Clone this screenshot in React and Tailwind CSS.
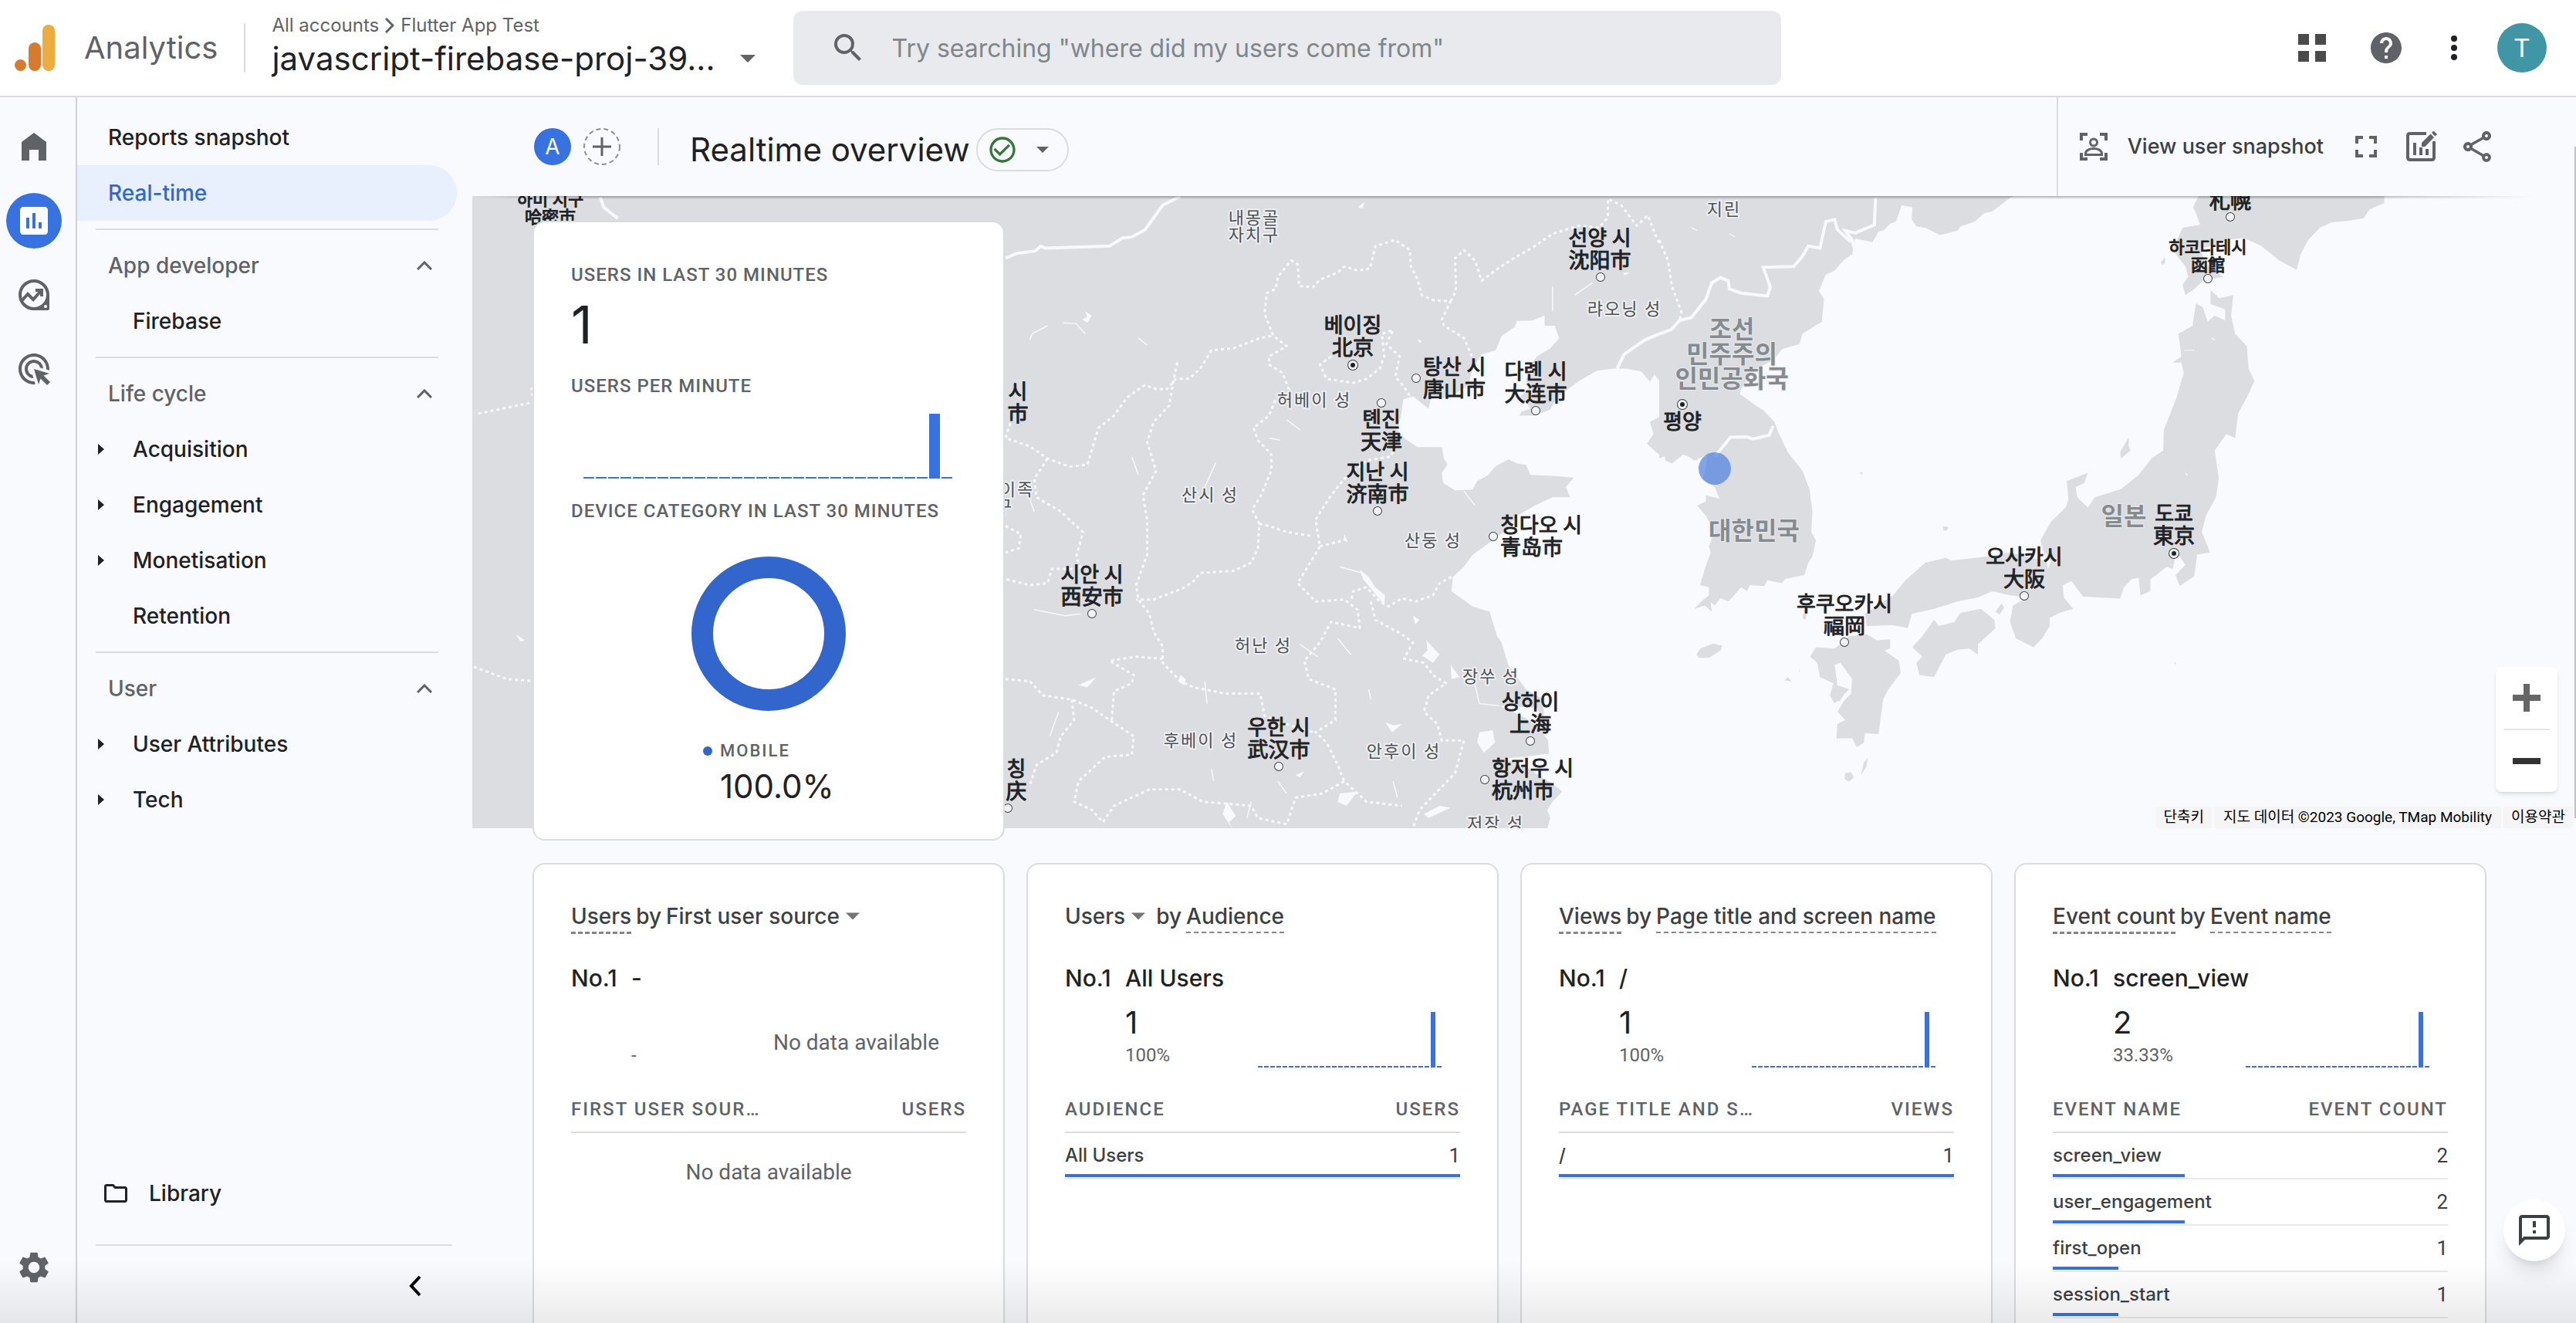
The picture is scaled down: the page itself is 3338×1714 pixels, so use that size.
import {
  MdAdsClick,
  MdCheckCircleOutline,
  MdHelp,
  MdInsertChart,
  MdOutlineFeedback,
  MdOutlineFolder,
  MdOutlineShare,
  MdSearch,
  MdSettings,
} from "react-icons/md";

/* ---------- small drawings ---------- */

function Triangle({ className }) {
  return (
    <svg viewBox="0 0 20 10" className={className} aria-hidden="true">
      <path d="M0 0H20L10 10Z" fill="currentColor" />
    </svg>
  );
}

function AnalyticsLogo() {
  return (
    <svg viewBox="0 0 52 60" className="h-[60px] w-[52px]" aria-hidden="true">
      <rect x="36" y="0" width="16" height="60" rx="8" fill="#ecac3f" />
      <rect x="18" y="23" width="16" height="37" rx="8" fill="#d67b2d" />
      <circle cx="7.5" cy="52.5" r="7.5" fill="#d67b2d" />
    </svg>
  );
}

function HomeIcon() {
  return (
    <svg viewBox="0 0 32 36" className="h-9 w-8" aria-hidden="true">
      <path d="M0 12L16 0L32 12V36H22V22H10V36H0Z" fill="currentColor" />
    </svg>
  );
}

function ExploreIcon() {
  return (
    <svg viewBox="0 0 40 40" className="size-10" fill="none" stroke="currentColor" aria-hidden="true">
      <path d="M38 20V38H20" strokeWidth="4" strokeLinejoin="round" />
      <path d="M38 24V38H24L32 33Z" fill="currentColor" stroke="none" />
      <circle cx="20" cy="20" r="18" strokeWidth="4" />
      <path d="M4 28L12 19L19 26L29 15" strokeWidth="4" />
      <path d="M22 12H32V22H28V16H22Z" fill="currentColor" stroke="none" />
      <circle cx="35" cy="35" r="2" fill="#fff" stroke="none" />
    </svg>
  );
}

function UserSnapshotIcon() {
  return (
    <svg viewBox="0 0 36 36" className="size-9" fill="none" stroke="currentColor" aria-hidden="true">
      <path d="M2 10V2H10M26 2H34V10M34 26V34H26M10 34H2V26" strokeWidth="4" />
      <circle cx="18" cy="12.5" r="4.5" strokeWidth="3" />
      <path d="M7.500 28.500V27C7.500 22.500 13 20.500 18 20.500S28.500 22.500 28.500 27V28.500Z" strokeWidth="3" />
    </svg>
  );
}

function FullscreenIcon() {
  return (
    <svg viewBox="0 0 28 28" className="size-7" fill="none" stroke="currentColor" aria-hidden="true">
      <path d="M2 10V2H10M18 2H26V10M26 18V26H18M10 26H2V18" strokeWidth="4" />
    </svg>
  );
}

function EditChartIcon() {
  return (
    <svg viewBox="0 0 40 42" className="h-[42px] w-10" fill="none" stroke="currentColor" aria-hidden="true">
      <path d="M26 4H5Q2 4 2 7V35Q2 38 5 38H33Q36 38 36 35V14" strokeWidth="4" />
      <path d="M11 16V32M19 22V32M27 24V32" strokeWidth="4" />
      <path d="M20 21V16L31.500 4.500L36 9L24.500 21Z" fill="currentColor" stroke="none" />
      <path d="M33 3L35.500 0.500L40 5L37.500 7.500Z" fill="currentColor" stroke="none" />
    </svg>
  );
}

/* ---------- header ---------- */

function Header() {
  return (
    <header className="flex h-[126px] shrink-0 items-center border-b-2 border-[#dadce0] bg-white pr-[38px] pl-[19px]">
      <AnalyticsLogo />
      <span className="ml-[38px] text-[40px] leading-[52px] text-[#5f6368]">Analytics</span>
      <div className="ml-[34px] h-16 w-0.5 bg-[#dadce0]" />
      <div className="ml-[34px]">
        <nav className="flex h-7 items-center gap-2 text-[24px] leading-7 text-[#5f6368]" aria-label="Breadcrumb">
          <a href="#accounts">All accounts</a>
          <svg viewBox="0 0 12 20" className="h-5 w-3" fill="none" stroke="currentColor" strokeWidth="3" aria-hidden="true">
            <path d="M1 1L10 10L1 19" />
          </svg>
          <a href="#flutter">Flutter App Test</a>
        </nav>
        <button className="flex h-[58px] items-center text-[42px] leading-[58px] text-[#202124]">
          javascript-firebase-proj-39...
          <Triangle className="ml-8 h-2.5 w-5 text-[#5f6368]" />
        </button>
      </div>
      <label className="ml-[49px] flex h-24 w-[1280px] items-center rounded-xl bg-[#e8eaed] pl-[47px]">
        <MdSearch className="size-12 shrink-0 text-[#5f6368]" />
        <input
          type="text"
          aria-label="Search"
          placeholder={'Try searching "where did my users come from"'}
          className="ml-[33px] h-full w-full bg-transparent text-[32px] text-[#3c4043] outline-none placeholder:text-[#80868b]"
        />
      </label>
      <div className="ml-auto flex items-center">
        <button aria-label="Apps" className="grid grid-cols-2 gap-2">
          <i className="size-3.5 bg-[#4a4a4a]" />
          <i className="size-3.5 bg-[#4a4a4a]" />
          <i className="size-3.5 bg-[#4a4a4a]" />
          <i className="size-3.5 bg-[#4a4a4a]" />
        </button>
        <button aria-label="Help" className="ml-[54px]">
          <MdHelp className="size-12 text-[#5f6368]" />
        </button>
        <button aria-label="More" className="ml-[60px] flex flex-col gap-1">
          <i className="size-2 rounded-full bg-[#202124]" />
          <i className="size-2 rounded-full bg-[#202124]" />
          <i className="size-2 rounded-full bg-[#202124]" />
        </button>
        <button
          aria-label="Account T"
          className="ml-[52px] flex size-16 items-center justify-center rounded-full bg-[#4196a6] font-['Roboto',sans-serif] text-[34px] text-white"
        >
          T
        </button>
      </div>
    </header>
  );
}

/* ---------- left rail and report navigation ---------- */

function Rail() {
  return (
    <nav aria-label="Sections" className="flex w-[100px] shrink-0 flex-col gap-6 border-r-2 border-[#d0d1d4] pt-7 pb-9 pl-2 text-[#5f6368]">
      <button aria-label="Home" className="flex size-[72px] items-center justify-center">
        <HomeIcon />
      </button>
      <button aria-label="Reports" className="flex size-[72px] items-center justify-center rounded-full bg-[#3871e0]">
        <MdInsertChart className="size-12 text-white" />
      </button>
      <button aria-label="Explore" className="flex size-[72px] items-center justify-center">
        <ExploreIcon />
      </button>
      <button aria-label="Advertising" className="flex size-[72px] items-center justify-center">
        <MdAdsClick className="size-12" />
      </button>
      <button aria-label="Admin" className="mt-auto flex size-[72px] items-center justify-center">
        <MdSettings className="size-12" />
      </button>
    </nav>
  );
}

const SECTIONS = [
  { title: "App developer", items: [["Firebase", false]] },
  {
    title: "Life cycle",
    items: [
      ["Acquisition", true],
      ["Engagement", true],
      ["Monetisation", true],
      ["Retention", false],
    ],
  },
  {
    title: "User",
    items: [
      ["User Attributes", true],
      ["Tech", true],
    ],
  },
];

function ReportNav() {
  return (
    <nav aria-label="Reports" className="flex w-[512px] shrink-0 flex-col pt-4 text-[28px] font-medium text-[#202124]">
      <a href="#snapshot" className="flex h-[72px] items-center pl-10">
        Reports snapshot
      </a>
      <a href="#realtime" aria-current="page" className="mr-5 flex h-[72px] items-center rounded-r-full bg-[#e8effd] pl-10 text-[#3367cf]">
        Real-time
      </a>
      {SECTIONS.map((s) => (
        <div key={s.title} className="pt-2.5">
          <div className="mr-11 ml-6 h-0.5 bg-[#dadce0]" />
          <button className="mt-2.5 flex h-[72px] w-full items-center justify-between pr-[52px] pl-10 text-[#5f6368]">
            {s.title}
            <svg viewBox="0 0 20 12" className="h-3 w-5" fill="none" stroke="currentColor" strokeWidth="3" aria-hidden="true">
              <path d="M1 11L10 2L19 11" />
            </svg>
          </button>
          {s.items.map(([name, opens]) => (
            <a key={name} href={"#" + name} className="flex h-[72px] items-center pl-[27px]">
              <svg viewBox="0 0 8 14" className="mr-[37px] h-3.5 w-2" aria-hidden="true">
                {opens && <path d="M0 0L8 7L0 14Z" fill="currentColor" />}
              </svg>
              {name}
            </a>
          ))}
        </div>
      ))}
      <a href="#library" className="mt-auto flex h-[72px] items-center pl-8">
        <MdOutlineFolder className="size-9" />
        <span className="ml-[25px]">Library</span>
      </a>
      <div className="mt-[30px] mr-[26px] ml-6 h-0.5 bg-[#dadce0]" />
      <button aria-label="Collapse" className="mt-[38px] mr-[66px] mb-[34px] self-end text-black">
        <svg viewBox="0 0 16 28" className="h-7 w-4" fill="none" stroke="currentColor" strokeWidth="4" aria-hidden="true">
          <path d="M14 2L3 14L14 26" />
        </svg>
      </button>
    </nav>
  );
}

/* ---------- report header ---------- */

function ReportHeader() {
  return (
    <div className="relative z-10 flex h-32 shrink-0 items-center bg-[#f8fafd] pr-[104px] pl-20">
      <span className="flex size-12 items-center justify-center rounded-full bg-[#3871e0] text-[28px] text-white">A</span>
      <button aria-label="Add comparison" className="ml-4 text-[#5f6368]">
        <svg viewBox="0 0 48 48" className="size-12" fill="none" stroke="currentColor" aria-hidden="true">
          <circle cx="24" cy="24" r="23" strokeWidth="2" strokeDasharray="6 4" opacity=".7" />
          <path d="M12 24H36M24 12V36" strokeWidth="3" />
        </svg>
      </button>
      <div className="ml-12 h-12 w-0.5 bg-[#dadce0]" />
      <h1 className="mt-2 ml-10 text-[42px] leading-[56px] text-[#202124]">Realtime overview</h1>
      <button aria-label="Report status" className="mt-2 ml-2 flex h-14 items-center rounded-full border-2 border-[#dadce0] pr-6 pl-3">
        <MdCheckCircleOutline className="size-10 text-[#34773a]" />
        <Triangle className="ml-6 h-2 w-4 text-[#5f6368]" />
      </button>
      <div className="ml-auto flex h-full items-center border-l-2 border-[#dadce0] pl-7 text-[#5f6368]">
        <button className="flex items-center gap-[26px] text-[27px] font-medium">
          <UserSnapshotIcon />
          <span className="text-[#3c4043]">View user snapshot</span>
        </button>
        <button aria-label="Full screen" className="ml-[41px]">
          <FullscreenIcon />
        </button>
        <button aria-label="Customise report" className="ml-[38px]">
          <EditChartIcon />
        </button>
        <button aria-label="Share" className="ml-7">
          <MdOutlineShare className="size-12" />
        </button>
      </div>
      <div className="absolute inset-x-0 top-full h-1 bg-gradient-to-b from-black/30 to-transparent [mask-image:linear-gradient(to_right,transparent,black_5%,black_90%,transparent_98%)]" />
    </div>
  );
}

/* ---------- map ---------- */

const CHINA =
  "M-1200 0H1568V655L1535 640L1510 662L1495 655L1490 628L1480 640L1453 614L1468 590L1460 560L1482 548L1488 520L1500 505L1503 470L1490 470L1470 445L1460 462L1440 437L1405 430L1380 430L1340 435L1300 460L1275 480L1250 500L1235 530L1200 545L1165 545L1170 535L1190 528L1180 510L1160 505L1185 480L1180 455L1195 440L1190 420L1205 400L1235 380L1255 355L1245 325L1222 325L1222 300L1195 312L1160 313L1155 328L1125 350L1112 385L1080 395L1060 430L1050 470L1010 500L965 505L960 528L945 515L925 498L903 505L898 545L890 580L905 600L935 622L990 622L995 650L1003 665L990 685L993 710L1020 728L1060 726L1070 705L1095 690L1110 670L1140 652L1160 662L1180 665L1190 690L1250 693L1288 697L1270 720L1280 745L1240 745L1200 765L1160 790L1130 830L1080 870L1060 885L1040 915L1015 940L1012 975L1060 1012L1098 1025L1115 1085L1125 1100L1140 1155L1160 1185L1180 1215L1220 1240L1220 1290L1205 1260L1120 1255L1180 1285L1210 1310L1230 1340L1232 1372L1190 1378L1130 1385L1180 1405L1245 1450L1262 1465L1240 1490L1228 1510L1235 1530L1225 1568H-1200Z";

const KOREA =
  "M0 0H620L600 12L570 45L555 50L540 70L515 82L510 92L480 103L455 85L440 82L432 65L433 35L415 30L405 70L395 75L385 90L375 95L365 120L335 112L330 150L315 165L300 190L285 200L273 240L282 260L278 315L245 345L240 370L210 382L195 410L165 430L140 480L138 492L165 520L178 532L197 560L205 590L220 635L245 680L257 725L262 780L260 830L268 850L262 890L255 905L248 935L215 945L210 955L185 948L180 962L155 960L150 975L140 965L125 990L118 1000L105 992L95 1010L88 1002L90 1025L78 1010L60 1018L72 1000L85 985L85 965L70 960L78 920L88 880L85 865L95 830L80 790L65 765L80 755L80 740L103 748L95 720L75 700L80 670L82 640L60 655L45 640L30 632L0 650Z";

const ISLANDS = [
  /* Hokkaido */
  "M925 0H1240L1240 25L1215 40L1205 62L1180 68L1150 72L1130 85L1110 115L1097 150L1090 188L1060 165L1030 130L1000 110L970 115L945 130L925 135L935 175L948 190L965 205L930 215L915 235L900 250L895 225L905 205L900 180L878 140L895 85L925 78L918 50L913 35Z",
  /* Honshu */
  "M943 238L958 258L982 250L978 300L985 345L1005 375L1008 430L1018 460L1005 500L990 540L985 600L970 590L950 630L957 700L952 745L935 790L928 830L942 880L920 885L915 938L890 962L883 935L900 910L885 880L878 920L868 915L850 935L840 945L840 975L823 985L820 942L808 945L795 965L788 993L725 988L705 950L690 960L692 990L708 1018L685 1028L668 1040L668 1060L655 1090L640 1112L610 1090L600 1050L605 1010L630 990L600 985L570 975L545 990L510 1000L470 1018L432 1030L425 1065L400 1058L355 1060L352 1030L400 985L420 950L455 905L490 893L500 900L560 890L600 880L640 895L662 900L652 850L670 805L695 770L700 750L697 705L733 685L727 710L712 720L715 745L733 770L745 745L790 725L820 690L842 650L862 630L863 580L885 500L897 440L893 415L878 415L893 400L888 345L912 325L918 270L930 280L938 315L950 300L968 312L968 285L943 272Z",
  /* Shikoku */
  "M470 1045L478 1060L505 1050L515 1028L550 1018L573 1045L575 1065L545 1105L545 1130L530 1115L510 1118L490 1130L470 1185L445 1180L440 1150L450 1135L433 1112L450 1085Z",
  /* Kyushu */
  "M355 1080L372 1095L395 1093L395 1115L385 1120L410 1145L413 1175L392 1215L383 1240L375 1325L352 1322L350 1345L338 1357L330 1335L303 1335L305 1300L318 1290L305 1270L315 1245L328 1225L330 1190L310 1150L300 1155L305 1205L325 1215L300 1250L292 1230L298 1200L275 1185L270 1150L258 1135L268 1112L300 1115L325 1085Z",
  /* Kyushu bay and Amakusa */
  "M300 1215L322 1215L308 1245L295 1235Z",
  /* Jeju, Sado, Tsushima, Oki, Tanegashima, Yakushima, Goto */
  "M64 1130L70 1115L92 1103L108 1108L105 1120L85 1138L68 1138Z",
  "M788 635L803 598L803 620L806 630L790 650Z",
  "M245 1040L250 1010L255 1020L250 1045Z",
  "M485 815L495 818L492 826L486 826Z",
  "M345 1425L350 1395L357 1382L354 1405Z",
  "M318 1420L328 1418L333 1430L324 1441L317 1434Z",
  "M213 1195L220 1185L227 1196L218 1193Z",
  "M237 1175L243 1160L240 1170Z",
  "M858 170L865 157L865 172L860 176Z",
  "M342 684L348 684L346 690Z",
  "M575 1025L585 1005L590 1015L582 1032Z",
  "M880 1148L885 1152L882 1154Z",
];

const PROVINCES = [
  "M1058 400L1040 355L995 325L990 310L1010 265L970 262L945 250L935 210L920 180L918 140L885 115L840 130L828 185L800 190L770 180L755 195L715 212L700 230L668 228L665 175L650 165L620 205L615 235L595 245L590 295L610 350L640 375L600 400L600 420L630 440L645 480L640 505L615 505L600 545L565 575L575 605L605 640L605 680L582 740L562 775L578 810L575 870L560 905L520 925L445 930L430 950L405 968L340 995L300 995",
  "M1010 265L1022 240L1020 160L1040 140L1065 165L1080 215L1110 190L1145 165L1200 130L1240 100L1300 80L1345 85L1365 60L1365 15L1395 30L1430 80L1455 55L1475 110L1500 160L1495 215L1530 290L1530 315",
  "M605 350L580 355L520 380L470 385L445 430L420 455L390 455L370 480L345 480L320 470L280 500L250 545L215 575L190 665L150 670L100 650L60 620L5 600L20 550",
  "M393 415L385 455L375 520L340 560L325 610L345 680L315 740L325 800L325 885L300 960L305 995L330 1030L340 1075L360 1110L360 1150L400 1195L430 1210L500 1225L580 1225L590 1280L640 1300L700 1320",
  "M740 400L715 420L730 455L790 465L820 455L850 430L860 400L855 345L880 335L865 370L895 400L885 450L905 475L920 500",
  "M885 620L875 645L820 655L770 700L740 740L705 800L715 865L690 910L665 955L705 1000L770 995L800 1020L805 1065L740 1050L715 1100L680 1145L690 1190L750 1215L750 1290L705 1320L730 1345L755 1400L770 1440",
  "M578 810L600 815L640 830L700 840M715 865L770 850",
  "M1012 940L985 955L970 985L930 1000L900 992L870 1012L850 1000L820 965L790 975L785 1000",
  "M830 1000L840 1045L900 1080L925 1100L905 1140L950 1150L970 1180L1000 1200L960 1230L950 1270L980 1300L990 1340L1040 1340L1020 1420L980 1465L940 1510L920 1568",
  "M5 1190L60 1195L90 1230L155 1240L200 1260L240 1290L295 1330L290 1375L230 1380L170 1440L160 1490L200 1510L225 1540L250 1500L330 1460L400 1460L450 1490L560 1500L575 1530L640 1545L660 1480L720 1470L770 1440L820 1490L900 1500",
  "M245 1290L250 1220L290 1200L295 1180L240 1145L300 1135L360 1140",
  "M155 1240L160 1290L130 1330L120 1370L75 1400L60 1450",
  "M100 650L70 700L75 745L130 780L180 830L165 890L175 920L110 920L100 955L60 960L5 945M5 815L40 835L35 870L5 880",
  "M-1185 540L-1060 512L-1000 492M-1060 512L-1065 480L-1030 440L-1005 400L-1000 340M-1195 1160L-1120 1190L-1000 1200",
];

const LAKES =
  "M185 290L200 300L190 318L178 310L190 303ZM800 35L815 22L812 38ZM805 922L825 940L840 965L862 985L860 1008L835 975L812 945ZM925 1035L940 1045L930 1056ZM955 1095L985 1130L970 1150L945 1132L958 1120ZM1010 1155L1030 1185L1012 1190ZM1075 1320L1105 1315L1110 1345L1085 1370L1070 1345ZM862 1295L880 1303L900 1300L878 1320ZM400 1180L412 1190L408 1205L395 1195ZM760 1470L800 1465L775 1500L755 1490ZM505 1490L525 1525L510 1540L520 1560L495 1520ZM950 1520L985 1500L1010 1505L960 1530ZM935 358L945 362L940 368ZM770 835L778 855L768 850ZM660 1425L680 1415L670 1430ZM1400 195L1415 195L1402 202ZM170 1205L210 1185L190 1210ZM-1050 590L-1030 595L-1040 603ZM-1100 1080L-1080 1095L-1090 1098Z";

const RIVERS =
  "M60 360L65 345L100 325M135 318L165 320L185 345M305 355L325 372M290 645L305 690M480 660L455 720M70 1020L140 1035L175 1030M760 915L810 930M670 1105L710 1135M755 1090L785 1130M1040 730L1065 765M1060 1180L1075 1250L1120 1255M1240 230L1240 290M1290 250L1330 220M105 1330L125 1270M455 1195L460 1250M60 750L70 780M825 1215L830 1240M600 600L625 605M640 555L670 580M470 1410L475 1440M560 1490L550 1530M620 1440L640 1470M880 1440L890 1480";

/* x, y is the centre of the first line; further lines run downwards */
const CITIES = [
  { x: 2073, y: 308, lines: ["선양 시", "沈阳市"], dot: [2074, 359] },
  { x: 1753, y: 421, lines: ["베이징", "北京"], dot: [1753, 473], capital: true },
  { x: 1844, y: 475, lines: ["탕산 시", "唐山市"], dot: [1835, 490], anchor: "start" },
  { x: 1990, y: 481, lines: ["다롄 시", "大连市"], dot: [1990, 532] },
  { x: 1790, y: 543, lines: ["톈진", "天津"], dot: [1790, 522] },
  { x: 1785, y: 611, lines: ["지난 시", "济南市"], dot: [1785, 662] },
  { x: 1944, y: 680, lines: ["칭다오 시", "青岛市"], dot: [1935, 695], anchor: "start" },
  { x: 1415, y: 744, lines: ["시안 시", "西安市"], dot: [1415, 795] },
  { x: 1983, y: 909, lines: ["상하이", "上海"], dot: [1983, 960] },
  { x: 1657, y: 942, lines: ["우한 시", "武汉市"], dot: [1657, 993] },
  { x: 1933, y: 995, lines: ["항저우 시", "杭州市"], dot: [1924, 1010], anchor: "start" },
  { x: 1319, y: 507, lines: ["시", "市"] },
  { x: 1317, y: 996, lines: ["칭", "庆"], dot: [1306, 1047] },
  { x: 2180, y: 546, lines: ["평양"], dot: [2180, 524], capital: true },
  { x: 2890, y: 260, lines: ["札幌"], dot: [2890, 281] },
  { x: 2390, y: 782, lines: ["후쿠오카시", "福岡"], dot: [2390, 832] },
  { x: 2623, y: 721, lines: ["오사카시", "大阪"], dot: [2623, 772] },
  { x: 2817, y: 665, lines: ["도쿄", "東京"], dot: [2817, 717], capital: true },
];

const TOWNS = [
  { x: 713, y: 258, lines: ["하미 지구", "哈密市"] },
  { x: 2861, y: 320, lines: ["하코다테시", "函館"], dot: [2861, 361] },
];

const REGIONS = [
  { x: 1625, y: 282, lines: ["내몽골", "자치구"] },
  { x: 2105, y: 400, lines: ["랴오닝 성"] },
  { x: 1703, y: 518, lines: ["허베이 성"] },
  { x: 1568, y: 641, lines: ["산시 성"] },
  { x: 1857, y: 700, lines: ["산둥 성"] },
  { x: 1637, y: 836, lines: ["허난 성"] },
  { x: 1932, y: 876, lines: ["장쑤 성"] },
  { x: 1556, y: 959, lines: ["후베이 성"] },
  { x: 1819, y: 973, lines: ["안후이 성"] },
  { x: 1938, y: 1067, lines: ["저장 성"] },
  { x: 1318, y: 634, lines: ["이족"] },
  { x: 1302, y: 656, lines: ["구"] },
  { x: 2234, y: 271, lines: ["지린"] },
];

const COUNTRIES = [
  { x: 2244, y: 426, lines: ["조선", "민주주의", "인민공화국"] },
  { x: 2273, y: 687, lines: ["대한민국"] },
  { x: 2752, y: 668, lines: ["일본"] },
];

function Labels({ places, step, shift, ...rest }) {
  return (
    <g textAnchor="middle" paintOrder="stroke" strokeLinejoin="round" {...rest}>
      {places.map((p) => (
        <g key={p.lines[0] + p.x}>
          {p.lines.map((l, i) => (
            <text key={l} x={p.x} y={p.y + shift + i * step} textAnchor={p.anchor}>
              {l}
            </text>
          ))}
          {p.dot && <circle cx={p.dot[0]} cy={p.dot[1]} r={p.capital ? 6 : 5} fill="#f1f2f4" stroke="#3c4043" strokeWidth="2" />}
          {p.capital && <circle cx={p.dot[0]} cy={p.dot[1]} r="3" fill="#202124" stroke="none" />}
        </g>
      ))}
    </g>
  );
}

function MapDrawing() {
  return (
    <svg
      viewBox="612 254 2726 819"
      preserveAspectRatio="xMinYMin slice"
      role="img"
      aria-label="Map of users in the last 30 minutes"
      className="absolute inset-0 h-full w-full font-['Roboto','Noto_Sans_CJK_KR',sans-serif]"
    >
      <g transform="translate(1300 250) scale(.574 .5293)" fill="none" stroke="#f8f9fc">
        <path d={CHINA} fill="#dcdde1" stroke="none" />
        <path d={LAKES} fill="#f8f9fc" stroke="none" />
        <path d={RIVERS} strokeWidth="1.500" vectorEffect="non-scaling-stroke" />
        {PROVINCES.map((d) => (
          <path key={d} d={d} strokeWidth="3" strokeDasharray="4 4" strokeLinejoin="round" vectorEffect="non-scaling-stroke" />
        ))}
        <path
          d="M5 160L30 148L72 142L85 130L95 135L240 130L270 110L290 108L320 90L360 30L400 8"
          strokeWidth="4"
          vectorEffect="non-scaling-stroke"
        />
        <path d="M-910 10L-902 35L-870 62" strokeWidth="4" vectorEffect="non-scaling-stroke" />
      </g>
      <g transform="translate(2150 250) scale(.7577 .5293)" fill="none" stroke="#f8f9fc">
        <g fill="#dcdde1" stroke="none">
          <path d={KOREA} />
          {ISLANDS.map((d) => (
            <path key={d} d={d} />
          ))}
        </g>
        <path d="M0 115L15 165L22 230L38 290L35 312" strokeWidth="3" strokeDasharray="4 4" vectorEffect="non-scaling-stroke" />
        <path
          d="M370 12L368 78L335 98L318 92L330 115L336 150M328 120L305 90L300 65L285 70L275 135L255 130L245 155L230 180L178 182L190 230L185 252L140 245L120 235L118 215L105 207L90 220L80 260L55 305L35 312L20 335L0 345L-25 360L-60 395L-72 430M95 645L122 598L150 597L160 602L188 593L195 570"
          strokeWidth="4"
          vectorEffect="non-scaling-stroke"
        />
        <path d="M55 85L65 92M120 100L130 108M945 355L950 360M898 385L915 385M900 685L903 692" strokeWidth="2" />
        <path d="M660 880L670 900L665 920Z" fill="#f8f9fc" stroke="none" />
      </g>
      <Labels places={REGIONS} step={22} shift={8} fontSize="22" letterSpacing="2" fill="#4d5156" stroke="#eff0f2" strokeWidth="4" />
      <Labels places={COUNTRIES} step={32} shift={12} fontSize="32" fontWeight="700" fill="#868b90" stroke="#e9eaed" strokeWidth="2" />
      <Labels places={TOWNS} step={23} shift={8} fontSize="22" fill="#202124" stroke="#202124" strokeWidth="1" />
      <Labels places={CITIES} step={29} shift={10} fontSize="27" fill="#202124" stroke="#202124" strokeWidth="1" />
      <circle cx="2222" cy="607" r="21" fill="#3871e0" opacity=".62" />
    </svg>
  );
}

/* Thirty one-minute columns; only minutes with activity rise above the base line. */
function MinuteBars({ pitch, height, base, className, label }) {
  return (
    <svg viewBox={`0 0 ${pitch * 30 - 2} ${height}`} className={className} role="img" aria-label={label}>
      {Array.from({ length: 30 }, (_, i) => {
        const h = i === 28 ? height : base;
        return <rect key={i} x={i * pitch} y={height - h} width={pitch - 2} height={h} fill="#3871e0" />;
      })}
    </svg>
  );
}

function SummaryCard() {
  const caption = "font-['Roboto',sans-serif] text-[24px] leading-8 font-medium tracking-[1px] text-[#5f6368] uppercase";
  return (
    <section className="absolute top-8 left-[78px] flex w-[612px] flex-col rounded-2xl border-2 border-[#dadce0] bg-white px-12 pt-[52px] pb-[42px]">
      <h2 className={caption}>Users in last 30 minutes</h2>
      <p className="mt-2 text-[68px] leading-[80px] text-[#202124]">1</p>
      <h2 className={caption + " mt-6"}>Users per minute</h2>
      <MinuteBars pitch={16} height={84} base={2} className="mt-5 ml-4 h-[84px] w-[478px]" label="Users per minute" />
      <h2 className={caption + " mt-[26px] whitespace-nowrap"}>Device category in last 30 minutes</h2>
      <svg viewBox="0 0 200 200" className="mt-[43px] size-[200px] self-center" role="img" aria-label="Mobile 100%">
        <circle cx="100" cy="100" r="86" fill="none" stroke="#3366cc" strokeWidth="28" />
      </svg>
      <div className="mt-9 flex items-center gap-2.5 self-start pl-[171px]">
        <i className="size-3 rounded-full bg-[#3366cc]" />
        <span className="font-['Roboto',sans-serif] text-[22px] leading-8 font-medium tracking-[2px] text-[#5f6368]">MOBILE</span>
      </div>
      <p className="mt-1 pl-[193px] text-[42px] leading-[52px] text-[#202124]">100.0%</p>
    </section>
  );
}

function MapSection() {
  return (
    <section className="relative h-[819px] shrink-0">
      <MapDrawing />
      <SummaryCard />
      <div className="absolute right-6 bottom-[47px] flex h-[162px] w-20 flex-col items-center rounded-lg bg-white shadow-md">
        <button aria-label="Zoom in" className="flex w-full flex-1 items-center justify-center">
          <svg viewBox="0 0 36 36" className="size-9" aria-hidden="true">
            <path d="M14 0H22V14H36V22H22V36H14V22H0V14H14Z" fill="#666" />
          </svg>
        </button>
        <div className="h-0.5 w-[60px] bg-[#e6e6e6]" />
        <button aria-label="Zoom out" className="flex w-full flex-1 items-center justify-center">
          <svg viewBox="0 0 36 8" className="h-2 w-9" aria-hidden="true">
            <path d="M0 0H36V8H0Z" fill="#333" />
          </svg>
        </button>
      </div>
      <div className="absolute right-1 bottom-0 flex gap-[3px] font-['Roboto','Noto_Sans_CJK_KR',sans-serif] text-[19px] leading-7 text-black">
        <button className="bg-[#f5f5f5] px-2.5">단축키</button>
        <span className="bg-[#f5f5f5] px-3">지도 데이터 ©2023 Google, TMap Mobility</span>
        <a href="#terms" className="bg-[#f5f5f5] px-2.5">
          이용약관
        </a>
      </div>
    </section>
  );
}

/* ---------- metric cards ---------- */

const CARDS = [
  {
    title: [{ text: "Users", line: "border-b-[3px]" }, { text: "by" }, { text: "First user source", menu: true }],
    top: "-",
    share: "-",
    columns: ["First user source", "Users"],
    rows: [],
  },
  {
    title: [{ text: "Users", menu: true }, { text: "by" }, { text: "Audience", line: "border-b-2" }],
    top: "All Users",
    value: "1",
    share: "100%",
    columns: ["Audience", "Users"],
    rows: [["All Users", 1, 100]],
  },
  {
    title: [{ text: "Views", line: "border-b-[3px]" }, { text: "by" }, { text: "Page title and screen name", line: "border-b-2" }],
    top: "/",
    value: "1",
    share: "100%",
    columns: ["Page title and screen name", "Views"],
    rows: [["/", 1, 100]],
  },
  {
    title: [{ text: "Event count", line: "border-b-[3px]" }, { text: "by" }, { text: "Event name", line: "border-b-2" }],
    top: "screen_view",
    value: "2",
    share: "33.33%",
    columns: ["Event name", "Event count"],
    rows: [
      ["screen_view", 2, 33.33],
      ["user_engagement", 2, 33.33],
      ["first_open", 1, 16.67],
      ["session_start", 1, 16.67],
    ],
  },
];

function TitlePart({ part }) {
  if (part.menu) {
    return (
      <button className="flex items-center">
        {part.text}
        <Triangle className="mx-2 h-2.5 w-[18px] text-[#757575]" />
      </button>
    );
  }
  if (part.line) {
    return <span className={"border-dashed border-[#80868b] " + part.line}>{part.text}</span>;
  }
  return <span>{part.text}</span>;
}

function MetricCard({ card }) {
  return (
    <article className="min-h-[640px] rounded-2xl border-2 border-[#dadce0] bg-white px-12 pt-[47px]">
      <h2 className="flex h-[43px] items-start gap-1.5 text-[28px] leading-10 font-medium whitespace-nowrap text-[#3c4043]">
        {card.title.map((part) => (
          <TitlePart key={part.text} part={part} />
        ))}
      </h2>
      <div className="mt-[37px] flex text-[30px] leading-10 font-medium text-[#202124]">
        <span className="w-[78px]">No.1</span>
        <span>{card.top}</span>
      </div>
      <div className="mt-3 flex h-[84px] items-end justify-between pl-[78px]">
        <div>
          {card.value && <p className="text-[40px] leading-[52px] text-[#202124]">{card.value}</p>}
          <p className="font-['Roboto',sans-serif] text-[24px] leading-8 text-[#5f6368]">{card.share}</p>
        </div>
        {card.value ? (
          <MinuteBars pitch={8} height={72} base={2} className="mr-6 h-[72px] w-[238px]" label={card.columns[1] + " per minute"} />
        ) : (
          <p className="mr-[35px] self-center pt-5 font-['Roboto',sans-serif] text-[28px] leading-8 text-[#5f6368]">No data available</p>
        )}
      </div>
      <table className="mt-6 w-full table-fixed border-collapse">
        <thead>
          <tr className="h-[60px] border-b-2 border-[#dadce0] font-['Roboto',sans-serif] text-[24px] text-[#5f6368] uppercase">
            <th className="w-1/2 truncate text-left font-medium tracking-[2px]">{card.columns[0]}</th>
            <th className="text-right font-medium tracking-[2px]">{card.columns[1]}</th>
          </tr>
        </thead>
        <tbody>
          {card.rows.map(([name, count, percent]) => (
            <tr key={name} className="relative h-[60px] border-b-2 border-[#e8eaed] text-[#3c4043]">
              <td className="text-[24px] font-medium">
                {name}
                <div className="absolute bottom-0 left-0 h-1 bg-[#3871e0]" style={{ width: percent + "%" }} />
              </td>
              <td className="text-right font-['Roboto',sans-serif] text-[26px]">{count}</td>
            </tr>
          ))}
          {card.rows.length === 0 && (
            <tr>
              <td colSpan={2} className="pt-[35px] text-center font-['Roboto',sans-serif] text-[28px] leading-8 text-[#5f6368]">
                No data available
              </td>
            </tr>
          )}
        </tbody>
      </table>
    </article>
  );
}

export default function App() {
  return (
    <div className="relative flex h-screen flex-col overflow-hidden bg-[#f8fafd] font-['Inter','Noto_Sans_CJK_KR',sans-serif]">
      <Header />
      <div className="flex min-h-0 flex-1">
        <Rail />
        <ReportNav />
        <main className="relative flex min-w-0 flex-1 flex-col overflow-hidden">
          <ReportHeader />
          <MapSection />
          <div className="mt-[45px] grid grid-cols-4 gap-7 pr-[116px] pl-[78px]">
            {CARDS.map((card) => (
              <MetricCard key={card.title[2].text} card={card} />
            ))}
          </div>
          <div className="absolute top-16 right-0 z-20 h-[870px] w-0.5 bg-[#c1c1c1]" />
        </main>
      </div>
      <div className="pointer-events-none absolute inset-x-0 bottom-0 h-20 bg-gradient-to-t from-black/8 to-transparent" />
      <button
        aria-label="Send feedback"
        className="absolute right-3.5 bottom-20 flex size-20 items-center justify-center rounded-full bg-white text-[#3c4043] shadow-xl"
      >
        <MdOutlineFeedback className="size-12" />
      </button>
    </div>
  );
}
